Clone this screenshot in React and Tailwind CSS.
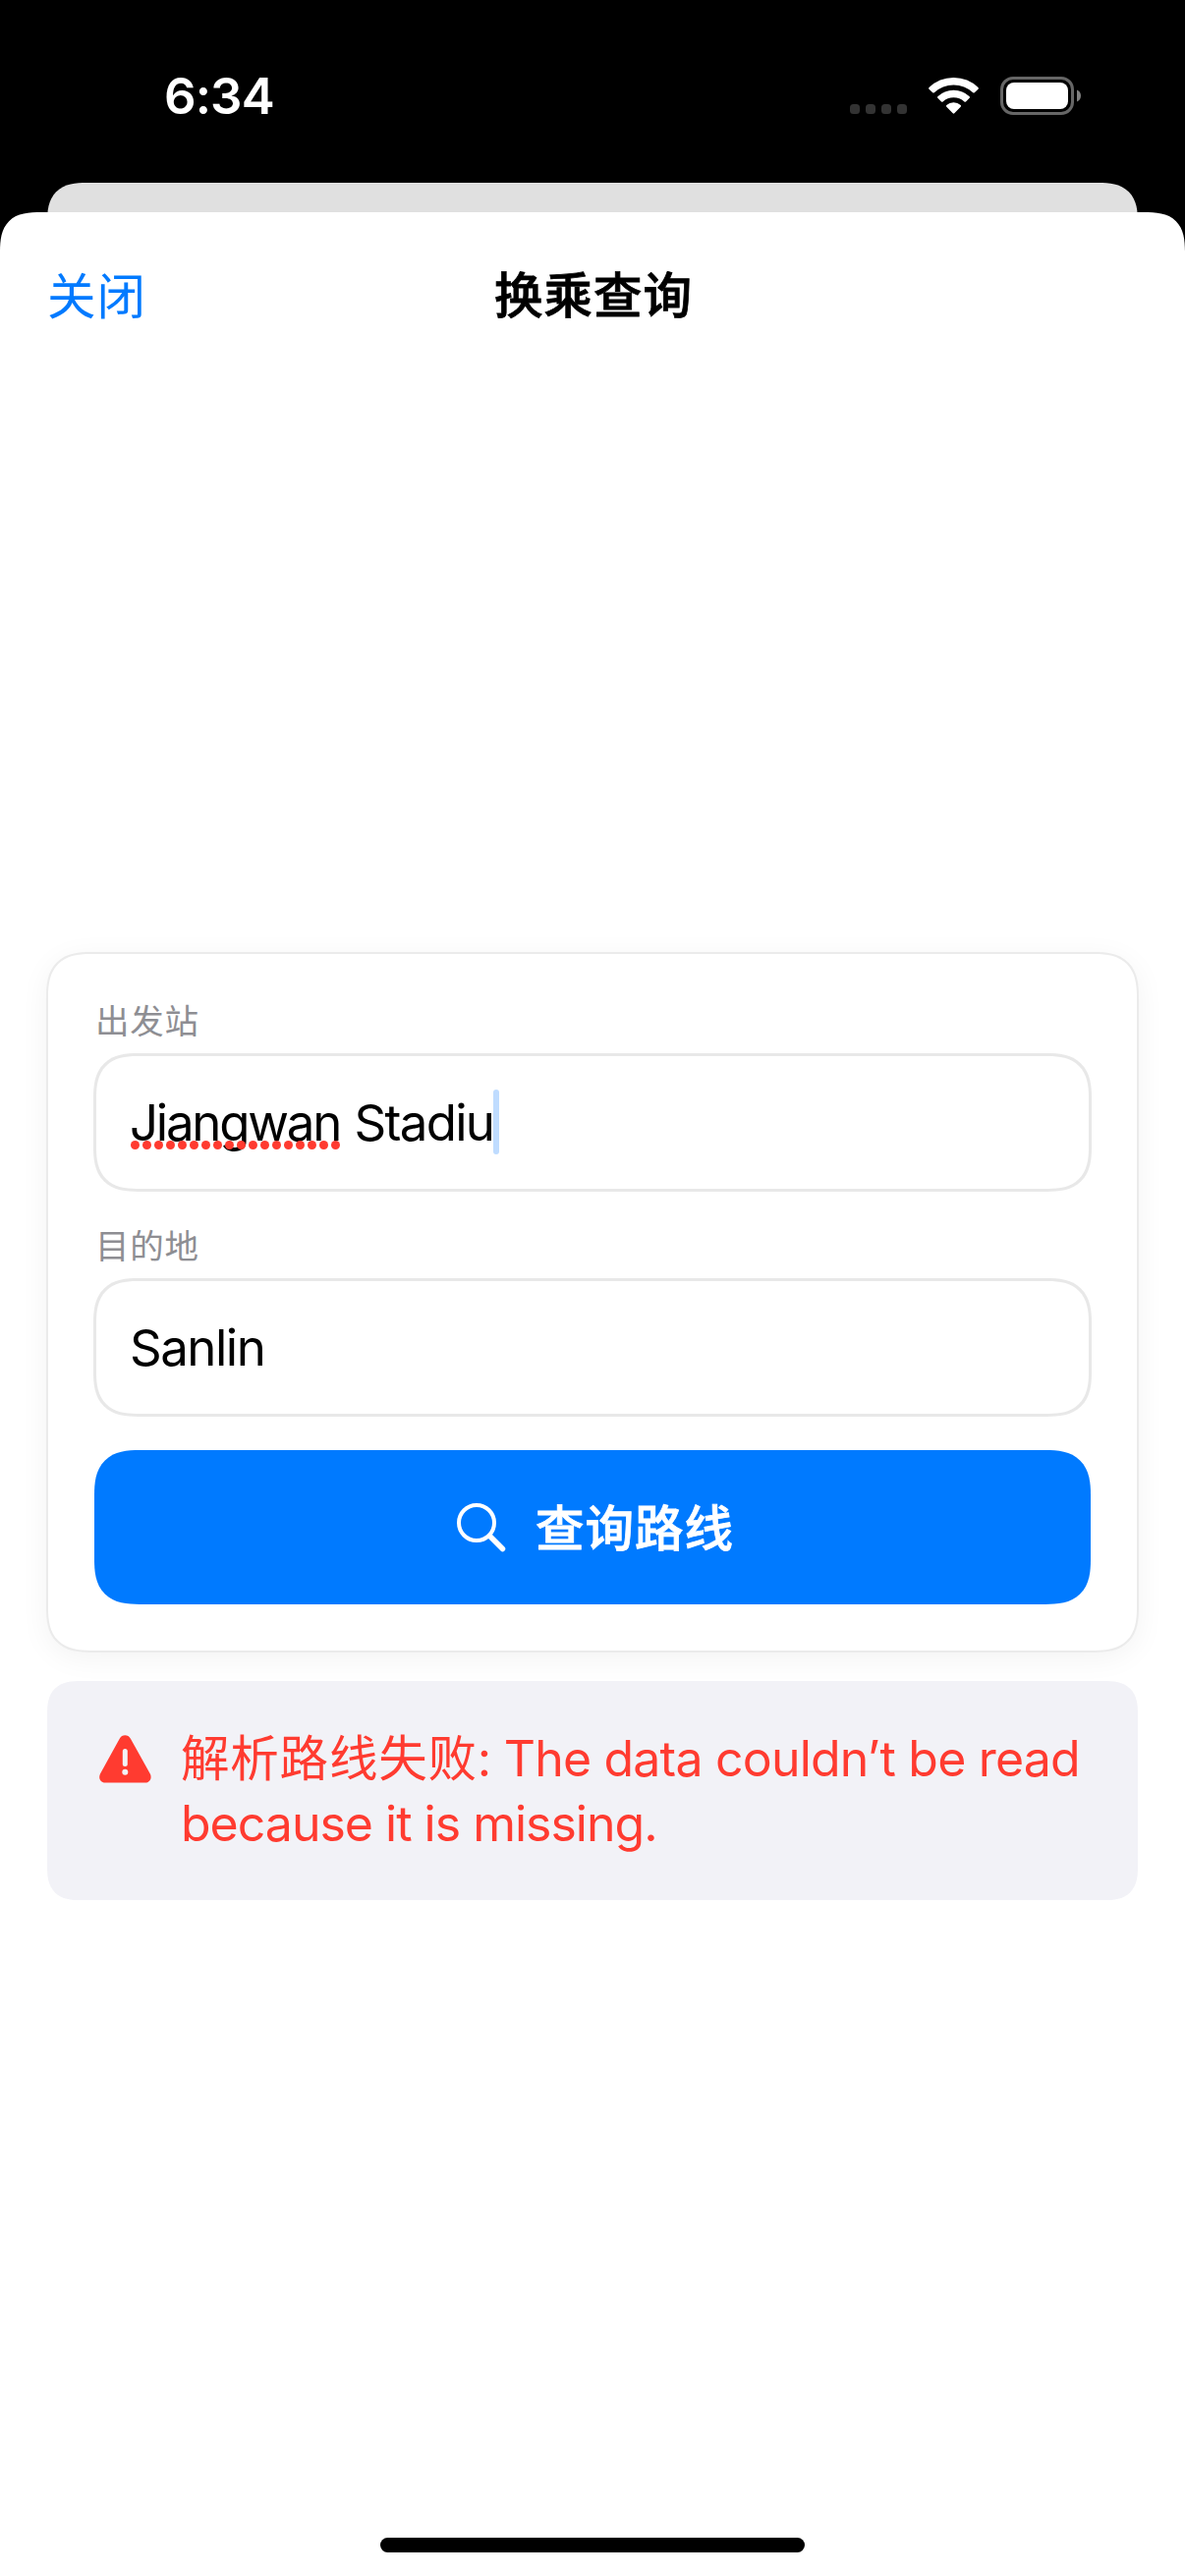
function SignalDots() {
  return (
    <div className="flex gap-[6px] pt-[28px]">
      {[0, 1, 2, 3].map((i) => (
        <span key={i} className="size-[10px] rounded-[3.5px] bg-[#333333]" />
      ))}
    </div>
  );
}

function WifiIcon() {
  return (
    <svg className="h-[37px] w-[51px]" viewBox="0 0 51 37" fill="white">
      <path d="M25.500 0.000 A36 36 0 0 1 50.500 10.000 Q51.200 10.900 50.500 11.700 L46.800 15.200 Q46.000 15.900 45.200 15.200 A28.800 28.800 0 0 0 5.800 15.200 Q5.000 15.900 4.200 15.200 L0.500 11.700 Q-0.200 10.900 0.500 10.000 A36 36 0 0 1 25.500 0Z" />
      <path d="M25.500 12.700 A23.400 23.400 0 0 1 41.700 19.200 Q42.400 20.000 41.700 20.800 L38 24.500 Q37.200 25.200 36.400 24.500 A16.200 16.200 0 0 0 14.600 24.500 Q13.800 25.200 13 24.500 L9.300 20.800 Q8.600 20.000 9.300 19.200 A23.400 23.400 0 0 1 25.500 12.700Z" />
      <path d="M25.500 25.200 A11 11 0 0 1 32.700 28 Q33.500 28.900 32.700 29.700 L26.300 36.300 Q25.500 37 24.700 36.300 L18.300 29.700 Q17.500 28.900 18.300 28 A11 11 0 0 1 25.500 25.200Z" />
    </svg>
  );
}

function BatteryIcon() {
  return (
    <svg className="h-[39px] w-[82px]" viewBox="0 0 82 39">
      <rect x="1.500" y="1.500" width="72" height="36" rx="11.500" fill="none" stroke="#666666" strokeWidth="3" />
      <rect x="6" y="6" width="63" height="27" rx="8" fill="white" />
      <path d="M78 13.500 C80.500 14.500 82 16.800 82 19.500 C82 22.200 80.500 24.500 78 25.500Z" fill="#808080" />
    </svg>
  );
}

function StatusBar() {
  return (
    <div className="flex h-[186px] items-start justify-between pr-[106px] pl-[167px]">
      <div className="mt-[67px] text-[51px] leading-[62px] font-semibold tracking-[-0.9px] text-white">6:34</div>
      <div className="mt-[78px] flex items-start">
        <SignalDots />
        <div className="mt-[1px] ml-[22px]">
          <WifiIcon />
        </div>
        <div className="ml-[22px] flex">
          <BatteryIcon />
        </div>
      </div>
    </div>
  );
}

function Field({ label, children }) {
  return (
    <div>
      <div className="pt-[1px] pl-[1px] text-[34.5px] leading-[53px] tracking-[0.7px] text-[#8e8e93]">{label}</div>
      <div className="mt-[6px] -mx-[1px] flex h-[141px] items-center rounded-[46px] border-[3px] border-[#e8e8e8] bg-white px-[34px] text-[51px] leading-[66px] text-black [corner-shape:superellipse(1.4)]">
        {children}
      </div>
    </div>
  );
}

function SpellingDots() {
  return (
    <span className="absolute top-[51px] left-[1px] flex gap-[3px]">
      {Array.from({ length: 18 }, (_, i) => (
        <span key={i} className="size-[9px] rounded-full bg-[#ff3b30]" />
      ))}
    </span>
  );
}

function SearchIcon() {
  return (
    <svg className="size-[50px]" viewBox="0 0 50 50" fill="none" stroke="white" strokeLinecap="round">
      <circle cx="20" cy="20" r="18" strokeWidth="4" />
      <path d="M33.500 33.500 L46.500 46.500" strokeWidth="5.500" />
    </svg>
  );
}

function WarningIcon() {
  return (
    <svg className="h-[49px] w-[53px]" viewBox="0 0 53 49">
      <path
        d="M20.700 3.700 C23 -0.900 29.500 -0.900 31.900 3.700 L51.800 39.500 C54 43.800 51.500 48.600 46.700 48.600 H6 C1.200 48.600 -1.200 43.800 1 39.500Z"
        fill="#ff3b30"
      />
      <path d="M26.300 16.600 V29.600" stroke="#f2f2f7" strokeWidth="5" strokeLinecap="round" />
      <circle cx="26.300" cy="37.800" r="3" fill="#f2f2f7" />
    </svg>
  );
}

export default function App() {
  return (
    <div className="flex h-[2622px] w-[1206px] flex-col overflow-hidden bg-black font-['Inter','Noto_Sans_CJK_SC',sans-serif]">
      <StatusBar />
      <div className="mx-[48px] -mb-[14px] h-[44px] shrink-0 rounded-t-[40px] bg-[#e0e0e0] [corner-shape:superellipse(1.4)]" />
      <main className="flex flex-1 flex-col rounded-t-[42px] bg-white [corner-shape:superellipse(1.5)]">
        <header className="grid h-[168px] grid-cols-3 items-center px-[48px] pt-[2px] text-[49.5px] leading-[74px] tracking-[1px]">
          <button className="pt-[1px] text-left text-[#007aff]">关闭</button>
          <h1 className="pl-[2px] text-center font-medium text-black [-webkit-text-stroke:0.8px_black]">换乘查询</h1>
        </header>

        <section className="mx-[47px] mt-[585px] flex h-[713px] flex-col rounded-[46px] border-[2px] border-[#ebebeb] bg-white px-[47px] pt-[41px] shadow-[0_6px_30px_rgba(0,0,0,0.05)] [corner-shape:superellipse(1.4)]">
          <Field label="出发站">
            <div className="relative flex">
              <span className="tracking-[-1.75px] whitespace-pre [word-spacing:2px]">
                <span className="tracking-[-2.25px]">Jiangwan</span> Stadiu
              </span>
              <SpellingDots />
              <span className="-mt-[1px] h-[66px] w-[6px] rounded-[3px] bg-[#bfdcff]" />
            </div>
          </Field>
          <div className="mt-[28px]">
            <Field label="目的地">
              <span className="tracking-[-1.5px]">Sanlin</span>
            </Field>
          </div>
          <button className="mt-[34px] flex h-[157px] items-center justify-center gap-[30px] rounded-[46px] bg-[#007aff] pl-[6px] text-[49.5px] leading-[74px] font-medium tracking-[1px] text-white [-webkit-text-stroke:0.8px_white] [corner-shape:superellipse(1.4)]">
            <SearchIcon />
            <span className="pt-[2px]">查询路线</span>
          </button>
        </section>

        <section className="mx-[48px] mt-[29px] flex h-[223px] rounded-[34px] bg-[#f2f2f7] pt-[46px] pl-[53px] text-[#ff3b30] [corner-shape:superellipse(1.4)]">
          <div className="mt-[9px]">
            <WarningIcon />
          </div>
          <p className="ml-[30px] text-[50px] leading-[66px] whitespace-nowrap">
            <span className="text-[49.5px] tracking-[0.8px]">解析路线失败</span>
            <span className="tracking-[-0.8px]">: The data couldn’t be read</span>
            <br />
            <span className="tracking-[-1px]">because it is missing.</span>
          </p>
        </section>

        <div className="mx-auto mt-auto mb-[24px] h-[15px] w-[432px] rounded-full bg-black" />
      </main>
    </div>
  );
}
